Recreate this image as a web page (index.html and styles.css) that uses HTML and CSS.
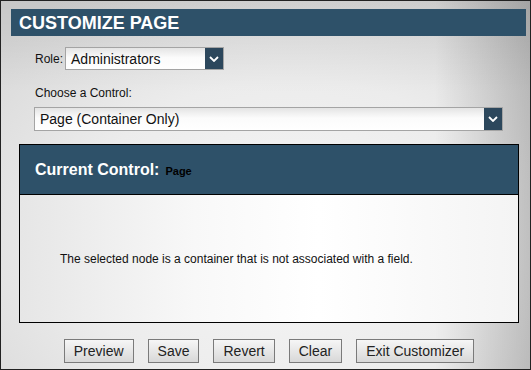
FILE: index.html
```html
<!DOCTYPE html>
<html lang="en">
<head>
    <meta charset="UTF-8">
    <title>Customize Page</title>
    <link rel="stylesheet" href="styles.css">
</head>
<body>
    <div class="page">
        <div class="title">CUSTOMIZE PAGE</div>

        <div class="role-row">
            <label>Role:</label>
            <div class="select role-select">
                <span class="value">Administrators</span>
                <span class="arrow">
                    <svg width="10" height="6" viewBox="0 0 10 6"><path d="M1 1 L5 5 L9 1" fill="none" stroke="#fff" stroke-width="1.8"/></svg>
                </span>
            </div>
        </div>

        <div class="choose-label">Choose a Control:</div>
        <div class="select control-select">
            <span class="value">Page (Container Only)</span>
            <span class="arrow">
                <svg width="10" height="6" viewBox="0 0 10 6"><path d="M1 1 L5 5 L9 1" fill="none" stroke="#fff" stroke-width="1.8"/></svg>
            </span>
        </div>

        <div class="panel">
            <div class="panel-head">
                <span class="panel-title">Current Control:</span>
                <span class="panel-name">Page</span>
            </div>
            <div class="panel-body">
                The selected node is a container that is not associated with a field.
            </div>
        </div>

        <div class="buttons">
            <button>Preview</button>
            <button>Save</button>
            <button>Revert</button>
            <button>Clear</button>
            <button>Exit Customizer</button>
        </div>
    </div>
</body>
</html>
```

FILE: styles.css
```css
body {
    margin: 0;
    padding: 0;
    font-family: "Liberation Sans", Arial, sans-serif;
}

.page {
    width: 531px;
    height: 370px;
    box-sizing: border-box;
    border: 1px solid #222;
    padding: 8px 4px 0 10px;
    background:
        linear-gradient(to right, rgba(0, 0, 0, 0) 82%, rgba(0, 0, 0, 0.18) 100%),
        linear-gradient(to bottom, rgba(0, 0, 0, 0.08) 0%, rgba(0, 0, 0, 0) 25%),
        radial-gradient(ellipse 75% 80% at 55% 65%, #f6f6f6 0%, #ececec 55%, #d8d8d8 100%);
}

.title {
    height: 27px;
    line-height: 28px;
    background-color: #2e5169;
    color: #ffffff;
    font-size: 18px;
    font-weight: bold;
    padding-left: 8px;
}

.role-row {
    display: flex;
    align-items: center;
    gap: 2px;
    margin-top: 11px;
    padding-left: 24px;
    font-size: 12px;
    color: #111;
}

.select {
    display: flex;
    box-sizing: border-box;
    border: 1px solid #a4a4a4;
    background: linear-gradient(to bottom, #e4e4e4 0%, #fbfbfb 45%, #ffffff 100%);
    font-size: 14px;
    color: #111;
}

.select .value {
    flex: 1;
    padding-left: 5px;
    align-self: center;
}

.select .arrow {
    width: 18px;
    background-color: #2c475c;
    display: flex;
    align-items: center;
    justify-content: center;
}

.role-select {
    width: 159px;
    height: 23px;
}

.choose-label {
    margin-top: 16px;
    padding-left: 24px;
    font-size: 12px;
    line-height: 14px;
    color: #111;
}

.control-select {
    width: 469px;
    height: 24px;
    margin-top: 7px;
    margin-left: 23px;
}

.panel {
    width: 500px;
    box-sizing: border-box;
    margin-top: 13px;
    margin-left: 8px;
    border: 1px solid #000;
}

.panel-head {
    height: 49px;
    background-color: #2e5169;
    border-bottom: 1px solid #000;
    display: flex;
    align-items: center;
    padding-left: 15px;
    gap: 6px;
}

.panel-title {
    color: #ffffff;
    font-size: 16px;
    font-weight: bold;
}

.panel-name {
    color: #000;
    font-size: 11px;
    font-weight: bold;
    margin-top: 2px;
}

.panel-body {
    height: 127px;
    display: flex;
    align-items: center;
    padding-left: 40px;
    font-size: 12px;
    color: #111;
    background: linear-gradient(to right, #e6e6e6 0%, #f8f8f8 35%, #ffffff 60%, #f4f4f4 100%);
}

.buttons {
    display: flex;
    justify-content: center;
    gap: 14px;
    margin-top: 16px;
    padding-left: 8px;
    width: 500px;
}

button {
    height: 24px;
    padding: 0 9px;
    border: 1px solid #7a7a7a;
    background: linear-gradient(to bottom, #f6f6f6 0%, #e4e4e4 60%, #d8d8d8 100%);
    font-family: "Liberation Sans", Arial, sans-serif;
    font-size: 14px;
    color: #222;
    cursor: pointer;
}
```
